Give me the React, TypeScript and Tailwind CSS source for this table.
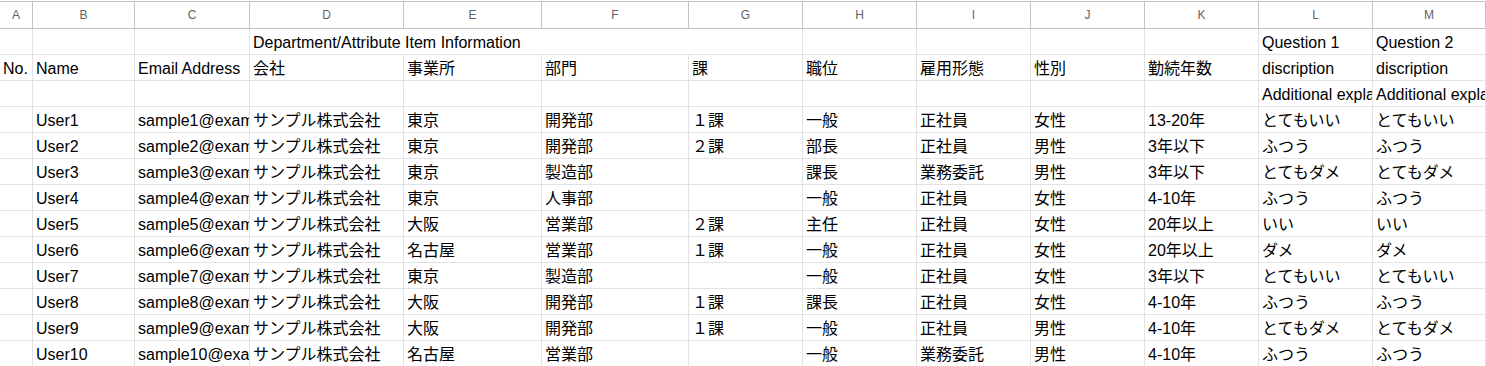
const cols = [
    { key: "A", w: "w-[33px]" },
    { key: "B", w: "w-[102px]" },
    { key: "C", w: "w-[115px]" },
    { key: "D", w: "w-[154px]" },
    { key: "E", w: "w-[138px]" },
    { key: "F", w: "w-[147px]" },
    { key: "G", w: "w-[114px]" },
    { key: "H", w: "w-[114px]" },
    { key: "I", w: "w-[114px]" },
    { key: "J", w: "w-[114px]" },
    { key: "K", w: "w-[114px]" },
    { key: "L", w: "w-[114px]" },
    { key: "M", w: "w-[113px]" },
]

const labels = ["No.", "Name", "Email Address", "会社", "事業所", "部門", "課", "職位", "雇用形態", "性別", "勤続年数", "discription", "discription"]
const extra = ["", "", "", "", "", "", "", "", "", "", "", "Additional explanation", "Additional explanation"]

const users: string[][] = [
    ["東京", "開発部", "１課", "一般", "正社員", "女性", "13-20年", "とてもいい"],
    ["東京", "開発部", "２課", "部長", "正社員", "男性", "3年以下", "ふつう"],
    ["東京", "製造部", "", "課長", "業務委託", "男性", "3年以下", "とてもダメ"],
    ["東京", "人事部", "", "一般", "正社員", "女性", "4-10年", "ふつう"],
    ["大阪", "営業部", "２課", "主任", "正社員", "女性", "20年以上", "いい"],
    ["名古屋", "営業部", "１課", "一般", "正社員", "女性", "20年以上", "ダメ"],
    ["東京", "製造部", "", "一般", "正社員", "女性", "3年以下", "とてもいい"],
    ["大阪", "開発部", "１課", "課長", "正社員", "女性", "4-10年", "ふつう"],
    ["大阪", "開発部", "１課", "一般", "正社員", "男性", "4-10年", "とてもダメ"],
    ["名古屋", "営業部", "", "一般", "業務委託", "男性", "4-10年", "ふつう"],
]

const rows: string[][] = users.map((u, i) => [
    "",
    `User${i + 1}`,
    `sample${i + 1}@example.com`,
    "サンプル株式会社",
    ...u,
    u[7],
])

function Cell({ w, text }: { w: string; text: string }) {
    return (
        <div className={`${w} shrink-0 h-full border-r border-[#e2e2e2] overflow-hidden whitespace-nowrap pl-[3px] pt-[2px] flex items-center leading-[20px]`}>
            {text}
        </div>
    )
}

export default function App() {
    return (
        <div
            className="w-[1486px] h-[366px] overflow-hidden bg-white pt-px text-[16px] text-black"
            style={{ fontFamily: '"Liberation Sans", Arial, "Noto Sans CJK JP", sans-serif' }}
        >
            {/* column letters */}
            <div className="flex h-[28px] border-y border-[#c4c4c4]">
                {cols.map((c) => (
                    <div
                        key={c.key}
                        className={`${c.w} shrink-0 border-r border-[#c4c4c4] flex items-center justify-center text-[12px] text-[#5f6368]`}
                    >
                        {c.key}
                    </div>
                ))}
            </div>

            {/* heading row, D:G merged */}
            <div className="flex h-[26px] border-b border-[#e2e2e2]">
                <Cell w="w-[33px]" text="" />
                <Cell w="w-[102px]" text="" />
                <Cell w="w-[115px]" text="" />
                <Cell w="w-[553px]" text="Department/Attribute Item Information" />
                <Cell w="w-[114px]" text="" />
                <Cell w="w-[114px]" text="" />
                <Cell w="w-[114px]" text="" />
                <Cell w="w-[114px]" text="" />
                <Cell w="w-[114px]" text="Question 1" />
                <Cell w="w-[113px]" text="Question 2" />
            </div>

            {[labels, extra, ...rows].map((r, i) => (
                <div key={i} className="flex h-[26px] border-b border-[#e2e2e2]">
                    {cols.map((c, j) => (
                        <Cell key={c.key} w={c.w} text={r[j]} />
                    ))}
                </div>
            ))}
        </div>
    )
}
